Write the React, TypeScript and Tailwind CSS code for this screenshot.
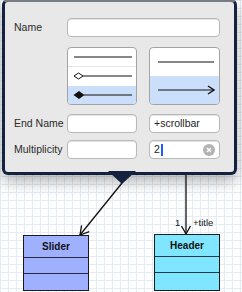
import React from "react";

const font = { fontFamily: '"Liberation Sans", Arial, sans-serif' };

function Input({ children, className = "" }: { children?: React.ReactNode; className?: string }) {
  return (
    <div
      className={`h-[19px] bg-white border border-[#b9b9b9] rounded-[4px] shadow-[inset_0_1px_1px_rgba(0,0,0,0.12)] flex items-center pl-[4px] text-[10.5px] text-[#222] ${className}`}
    >
      {children}
    </div>
  );
}

function Label({ children }: { children: React.ReactNode }) {
  return <div className="text-[10.5px] text-[#2a2a2a] flex items-center whitespace-nowrap">{children}</div>;
}

export default function App() {
  return (
    <div
      className="relative w-[242px] h-[292px] overflow-hidden bg-white bg-[linear-gradient(to_right,#e4edf7_1px,transparent_1px),linear-gradient(to_bottom,#e4edf7_1px,transparent_1px)] bg-[size:8px_8px]"
      style={font}
    >
      {/* connectors */}
      <svg className="absolute left-0 top-0" width="242" height="292" viewBox="0 0 242 292">
        <g stroke="#111" strokeWidth="1.3" fill="none">
          <line x1="122" y1="183" x2="80" y2="235" />
          <polyline points="89.3,231.6 80,235 81.6,225.4" />
          <line x1="186" y1="172" x2="186" y2="234" />
          <polyline points="181.5,226 186,234 190.5,226" />
        </g>
      </svg>
      <div className="absolute left-[175px] top-[216px] text-[9.5px] text-[#111]">1</div>
      <div className="absolute left-[193px] top-[216px] text-[9.5px] text-[#111]">+title</div>

      {/* Slider class */}
      <div className="absolute left-[23px] top-[235px] w-[66px] h-[56px] bg-[#9fb0ff] border-[1.5px] border-[#1c1c1c] flex flex-col">
        <div className="h-[21px] flex items-center justify-center text-[10px] font-bold text-[#111]">Slider</div>
        <div className="h-[16px] border-t border-[#2a2a44]" />
        <div className="flex-1 border-t border-[#2a2a44]" />
      </div>

      {/* Header class */}
      <div className="absolute left-[154px] top-[234px] w-[66px] h-[57px] bg-[#80e6ff] border-[1.5px] border-[#1c1c1c] flex flex-col">
        <div className="h-[21px] flex items-center justify-center text-[10px] font-bold text-[#111]">Header</div>
        <div className="h-[16px] border-t border-[#1f3a44]" />
        <div className="flex-1 border-t border-[#1f3a44]" />
      </div>

      {/* popover */}
      <div className="absolute left-[2px] top-[-1px] w-[235px] h-[176px] rounded-[6px] bg-[#14223f] border-[3px] border-[#14223f] border-t-[#767b84] shadow-[0_6px_16px_rgba(0,0,0,0.32)]">
        <div className="w-full h-full bg-[#e8e8e8] rounded-[3px] pt-[16px] pl-[9px] flex flex-col">
          <div className="grid grid-cols-[41px_70px_71px] gap-x-[12px]">
            <Label>Name</Label>
            <Input className="col-span-2" />
          </div>
          <div className="grid grid-cols-[41px_70px_71px] gap-x-[12px] mt-[10px]">
            <div />
            <div className="h-[58px] bg-white border border-[#a3a3a3] rounded-[4px] overflow-hidden flex flex-col">
              <div className="flex-1 flex items-center pl-[5px] border-b border-[#e4e4e4]">
                <svg width="60" height="8" viewBox="0 0 60 8">
                  <line x1="1" y1="4" x2="59" y2="4" stroke="#111" strokeWidth="1.2" />
                </svg>
              </div>
              <div className="flex-1 flex items-center pl-[5px]">
                <svg width="60" height="8" viewBox="0 0 60 8">
                  <line x1="10" y1="4" x2="59" y2="4" stroke="#111" strokeWidth="1.2" />
                  <polygon points="1,4 5.5,1 10,4 5.5,7" fill="#fff" stroke="#111" strokeWidth="1" />
                </svg>
              </div>
              <div className="flex-1 flex items-center pl-[5px] bg-[#cbdffb]">
                <svg width="60" height="10" viewBox="0 0 60 10">
                  <line x1="11" y1="5" x2="59" y2="5" stroke="#111" strokeWidth="1.2" />
                  <polygon points="0.5,5 6,1 11.5,5 6,9" fill="#111" />
                </svg>
              </div>
            </div>
            <div className="h-[58px] bg-white border border-[#a3a3a3] rounded-[4px] overflow-hidden flex flex-col">
              <div className="flex-1 flex items-center pl-[7px]">
                <svg width="58" height="8" viewBox="0 0 58 8">
                  <line x1="1" y1="4" x2="57" y2="4" stroke="#111" strokeWidth="1.2" />
                </svg>
              </div>
              <div className="flex-1 flex items-center pl-[7px] bg-[#cbdffb]">
                <svg width="58" height="10" viewBox="0 0 58 10">
                  <line x1="1" y1="5" x2="57" y2="5" stroke="#111" strokeWidth="1.2" />
                  <polyline points="51,1 57,5 51,9" fill="none" stroke="#111" strokeWidth="1.4" />
                </svg>
              </div>
            </div>
          </div>
          <div className="grid grid-cols-[41px_70px_71px] gap-x-[12px] mt-[9px]">
            <Label>End Name</Label>
            <Input />
            <Input>+scrollbar</Input>
          </div>
          <div className="grid grid-cols-[41px_70px_71px] gap-x-[12px] mt-[7px]">
            <Label>Multiplicity</Label>
            <Input />
            <Input className="relative">
              <span>2</span>
              <span className="ml-[1px] w-[2px] h-[12px] bg-[#1f5cff]" />
              <span className="absolute right-[4px] top-[2.5px] w-[12px] h-[12px] rounded-full bg-[#b3b3b3] flex items-center justify-center">
                <svg width="6" height="6" viewBox="0 0 6 6">
                  <path d="M1 1 L5 5 M5 1 L1 5" stroke="#fff" strokeWidth="1.4" />
                </svg>
              </span>
            </Input>
          </div>
        </div>
      </div>

      {/* pointer */}
      <svg className="absolute left-[108px] top-[171px]" width="28" height="14" viewBox="0 0 28 14">
        <polygon points="0,0 28,0 14,13" fill="#14223f" />
      </svg>
    </div>
  );
}
